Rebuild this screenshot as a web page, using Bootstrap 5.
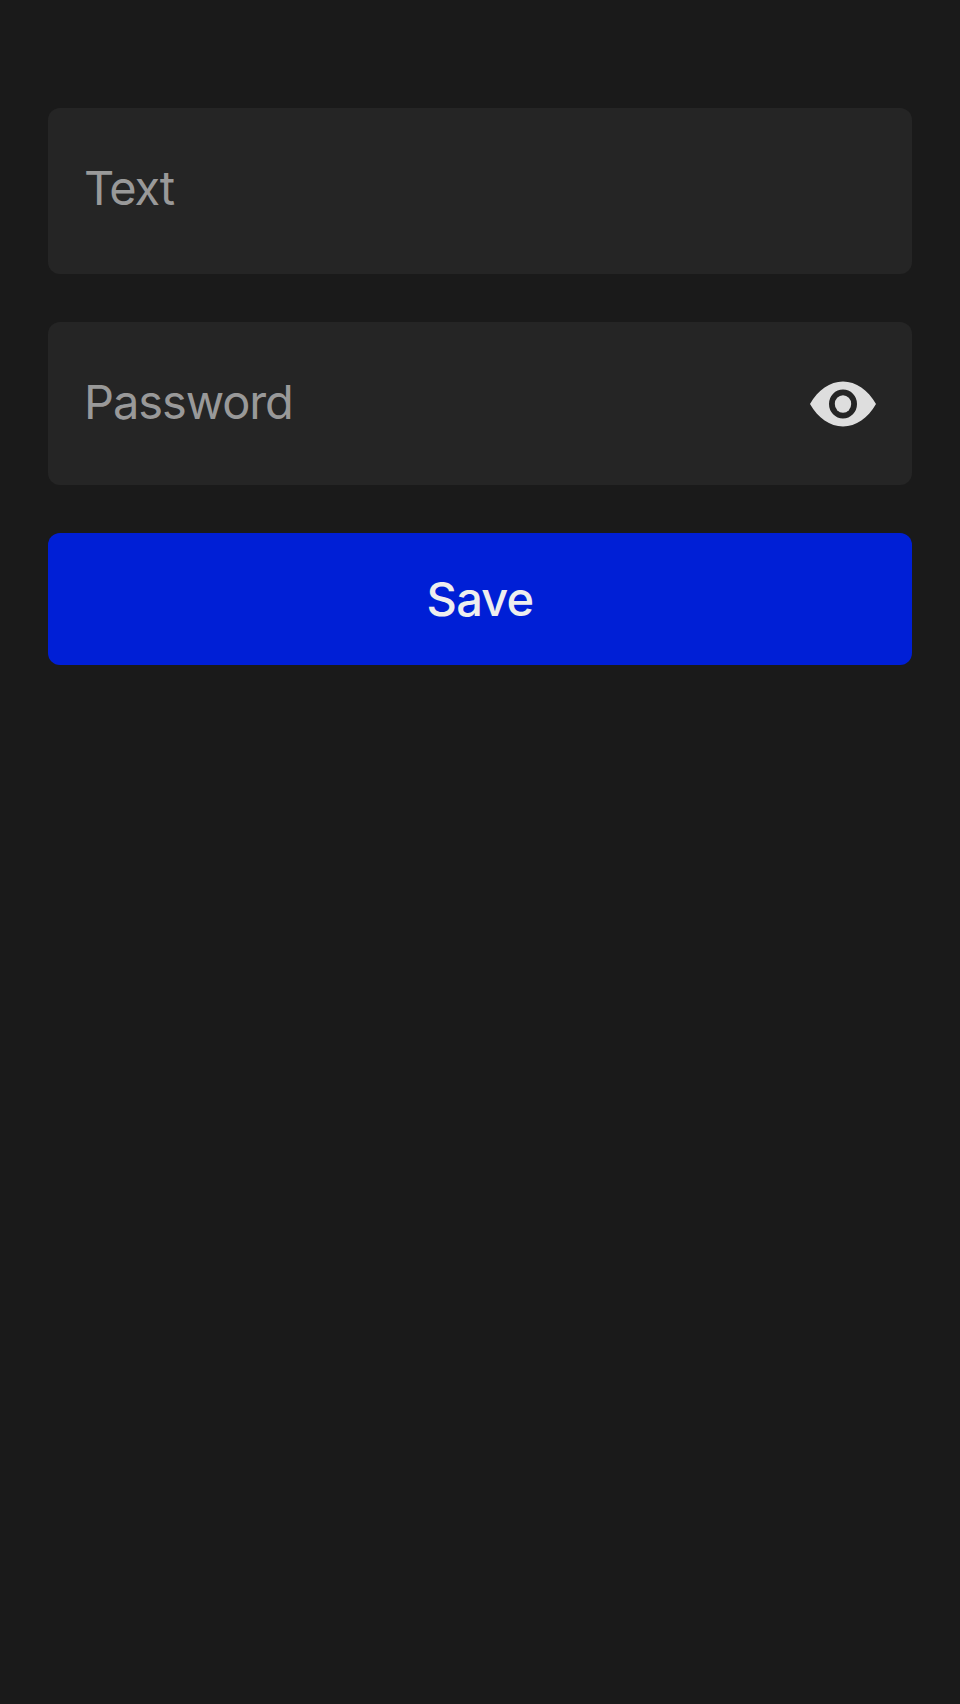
<!DOCTYPE html>
<html lang="en">
<head>
<meta charset="utf-8">
<meta name="viewport" content="width=device-width, initial-scale=1">
<title>Form</title>
<link href="https://cdn.jsdelivr.net/npm/bootstrap@5.3.0/dist/css/bootstrap.min.css" rel="stylesheet">
<style>
body { background: #1a1a1a; font-family: Inter, sans-serif; font-size: 47px; line-height: 58px; }
.form-page { padding: 108px 48px 0; gap: 48px; }
.field { background: #252525; border-radius: 12px; color: #999; padding: 0 33px 0 36px; }
.field-text { height: 166px; padding-bottom: 6px; }
.field-password { height: 163px; }
.save-btn { --bs-btn-bg: #001fd6; --bs-btn-color: #eee; --bs-btn-hover-bg: #001bc0; --bs-btn-hover-color: #fff; height: 132px; border: 0; border-radius: 12px; font-size: 47px; line-height: 58px; font-weight: 500; }
.eye-btn { color: #dedede; line-height: 0; }
.t-text { letter-spacing: -1.3px; }
.t-password { letter-spacing: -1.1px; padding-bottom: 4px; }
.t-save { letter-spacing: -.8px; }
</style>
</head>
<body>
<form class="form-page d-flex flex-column">
  <label class="field field-text d-flex align-items-center"><span class="t-text">Text</span></label>
  <div class="field field-password d-flex align-items-center justify-content-between">
    <label class="t-password">Password</label>
    <button type="button" class="eye-btn btn p-0 border-0" aria-label="Show password">
      <svg width="72" height="46" viewBox="0 0 72 46" fill="currentColor"><path fill-rule="evenodd" d="M3 23C11 9 23 .5 36 .5S61 9 69 23C61 37 49 45.500 36 45.500S11 37 3 23ZM36 8.600a14 14.400 0 1 0 0 28.800a14 14.400 0 1 0 0-28.800Z"/><ellipse cx="36" cy="23" rx="8.200" ry="8.700"/></svg>
    </button>
  </div>
  <button type="button" class="btn save-btn"><span class="t-save">Save</span></button>
</form>
<script src="https://cdn.jsdelivr.net/npm/bootstrap@5.3.0/dist/js/bootstrap.bundle.min.js"></script>
</body>
</html>
